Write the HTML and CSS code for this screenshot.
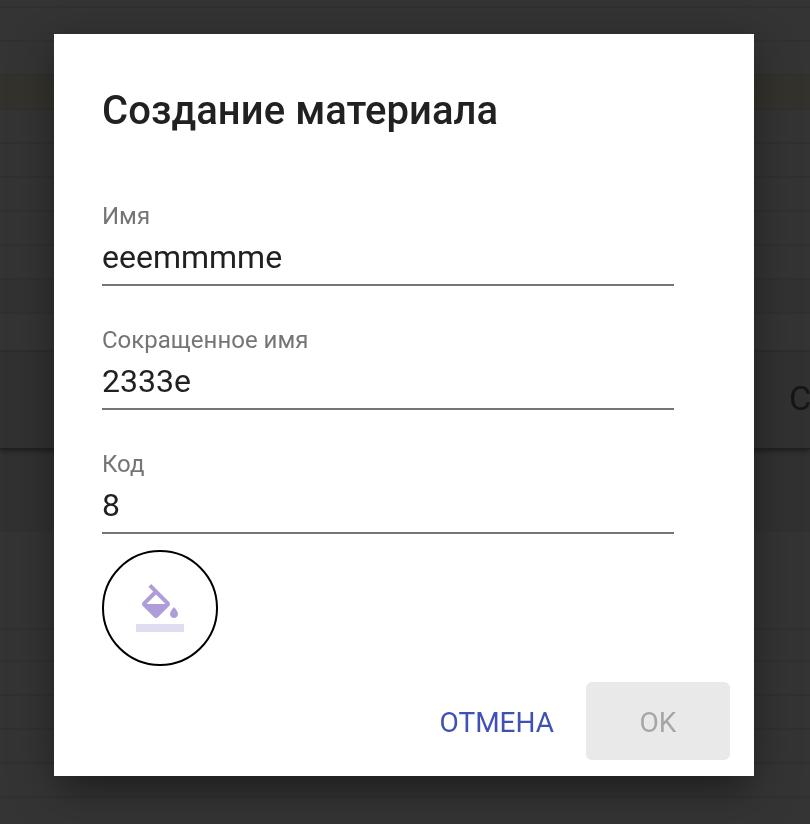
FILE: index.html
```html
<!DOCTYPE html>
<html lang="ru">
<head>
<meta charset="utf-8">
<title>Создание материала</title>
<link rel="stylesheet" href="styles.css">
</head>
<body>
<div class="page">
  <div class="row first"></div>
  <div class="row"></div>
  <div class="row"></div>
  <div class="row selected"></div>
  <div class="row"></div>
  <div class="row"></div>
  <div class="row"></div>
  <div class="row"></div>
  <div class="row"></div>
  <div class="row dim"></div>
  <div class="row last"></div>
  <div class="toolbar"><span class="toolbar-title">С</span></div>
  <div class="band"></div>
  <div class="row tall"></div>
  <div class="row short"></div>
  <div class="row"></div>
  <div class="row"></div>
  <div class="row"></div>
  <div class="row"></div>
  <div class="row"></div>
</div>
<div class="overlay">
  <div class="dialog" role="dialog">
    <h1 class="title">Создание материала</h1>
    <div class="fields">
      <div class="field"><div class="label">Имя</div><div class="value">eeemmmme</div></div>
      <div class="field"><div class="label">Сокращенное имя</div><div class="value">2333e</div></div>
      <div class="field"><div class="label">Код</div><div class="value">8</div></div>
    </div>
    <button class="color" type="button">
      <svg viewBox="0 0 24 24" width="48" height="48" fill="#ae9dd8">
        <path d="M16.56 8.94L7.62 0 6.21 1.41l2.38 2.38-5.15 5.15c-.59.59-.59 1.54 0 2.12l5.5 5.5c.29.29.68.44 1.06.44s.77-.15 1.06-.44l5.5-5.5c.59-.58.59-1.53 0-2.12zM5.21 10L10 5.21 14.79 10H5.21zM19 11.5s-2 2.17-2 3.5c0 1.1.9 2 2 2s2-.9 2-2c0-1.33-2-3.5-2-3.5z"/>
        <path fill-opacity=".36" d="M0 20h24v4H0z"/>
      </svg>
    </button>
    <div class="actions">
      <button class="btn cancel" type="button">ОТМЕНА</button>
      <button class="btn ok" type="button" disabled>OK</button>
    </div>
  </div>
</div>
</body>
</html>
```

FILE: styles.css
```css
* { box-sizing: border-box; }
body {
  margin: 0;
  height: 824px;
  overflow: hidden;
  background: #343434;
  font-family: Roboto, "Liberation Sans", sans-serif;
  color: #212121;
}
.page { height: 824px; overflow: hidden; }
.row { height: 34px; border-bottom: 2px solid #303030; }
.row.first { height: 8px; }
.row.selected { background: #34322c; }
.row.dim { background: #323232; }
.row.last { height: 38px; }
.row.tall { height: 98px; }
.row.short { height: 32px; }
.toolbar {
  position: relative;
  height: 97px;
  padding-left: 789px;
  background: #313131;
  border-bottom: 1px solid #202020;
  box-shadow: 0 2px 5px rgba(0, 0, 0, .4);
}
.toolbar-title {
  display: block;
  font-size: 34px;
  line-height: 93px;
  color: #151515;
}
.band { height: 83px; background: #313131; }
.overlay {
  position: fixed;
  inset: 0;
  padding: 34px 56px 48px 54px;
  overflow: hidden;
}
.dialog {
  width: 700px;
  height: 742px;
  padding: 49px 24px 16px 48px;
  display: flex;
  flex-direction: column;
  background: #fff;
  box-shadow: 0 22px 30px -14px rgba(0, 0, 0, .26),
    0 16px 48px 4px rgba(0, 0, 0, .14),
    0 6px 36px 2px rgba(0, 0, 0, .16);
}
.title {
  margin: 0 0 39px;
  font-size: 40px;
  line-height: 56px;
  font-weight: 500;
  letter-spacing: .06px;
}
.fields { width: 572px; }
.field {
  height: 124px;
  padding-top: 24px;
}
.label {
  font-size: 24px;
  line-height: 28px;
  color: #757575;
}
.value {
  height: 56px;
  padding-top: 8px;
  font-size: 32px;
  line-height: 38px;
  border-bottom: 2px solid #757575;
}
.color {
  width: 116px;
  height: 116px;
  flex: none;
  padding: 0;
  display: flex;
  align-items: center;
  justify-content: center;
  border: 2px solid #000;
  border-radius: 50%;
  background: none;
}
.actions {
  margin-top: 16px;
  display: flex;
  justify-content: flex-end;
}
.btn {
  height: 78px;
  padding: 4px 32px 0;
  border: 0;
  border-radius: 6px;
  background: none;
  font: 400 28px/74px Roboto, "Liberation Sans", sans-serif;
}
.cancel { color: #3f51b5; }
.ok { width: 144px; background: #e9e9e9; color: #a6a6a6; }
```
